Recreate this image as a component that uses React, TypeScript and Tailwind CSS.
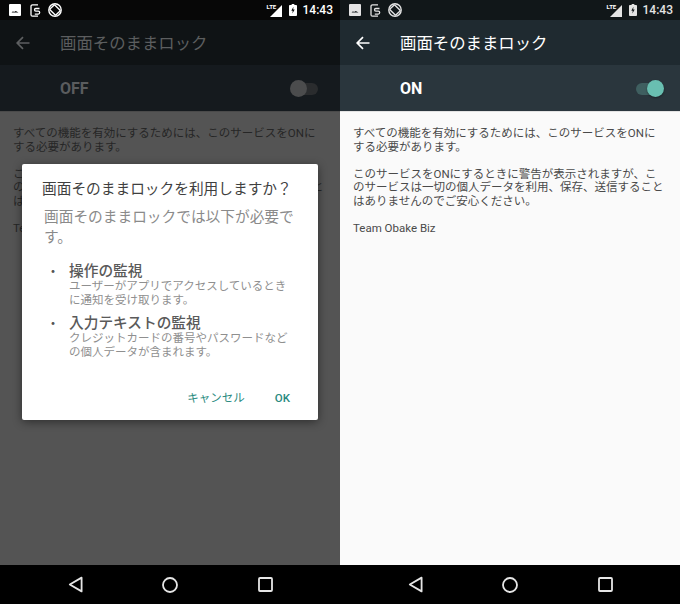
const font = "font-['Roboto','Noto_Sans_CJK_JP',sans-serif]";

function StatusIcons({ dim }: { dim?: boolean }) {
  const c = dim ? "#e4e4e4" : "#ffffff";
  const bg = dim ? "#111719" : "#070707";
  return (
    <div className="flex h-5 items-center pl-[9px] pr-[7px]">
      <svg width="12" height="12" viewBox="0 0 12 12">
        <rect x="0" y="0" width="12" height="12" rx="1" fill={c} />
        <path d="M2.5 8.6 4 7.2 5 8 6.8 7 9.5 8.6Z" fill={bg} />
      </svg>
      <svg className="ml-[9px]" width="11" height="13" viewBox="0 0 11 13" fill="none" stroke={c} strokeWidth="1.3">
        <path d="M8 .8H2.5A1.5 1.5 0 0 0 1 2.3v8.4a1.5 1.5 0 0 0 1.5 1.5H8" />
        <path d="M9.5 4.5H5.8a1.2 1.2 0 0 0 0 2.6h2.4a1.5 1.5 0 0 1 0 3H4.8" />
      </svg>
      <svg className="ml-[7px]" width="14" height="14" viewBox="0 0 14 14" fill="none" stroke={c} strokeWidth="1.4">
        <circle cx="7" cy="7" r="6.2" />
        <rect x="3.6" y="2.8" width="6.8" height="8.4" rx=".8" transform="rotate(-45 7 7)" fill={bg} />
      </svg>
      <div className="flex-1" />
      <div className="relative h-[13px] w-[15px]">
        <svg className="absolute left-0 top-[1px]" width="15" height="12" viewBox="0 0 15 12">
          <path d="M15 0v12H3Z" fill={c} />
        </svg>
        <span className={`absolute left-0 top-0 text-[6px] font-bold leading-[6px] text-white ${font}`}>LTE</span>
      </div>
      <svg className="ml-[7px]" width="8" height="12" viewBox="0 0 9 13" preserveAspectRatio="none">
        <path d="M3 0h3v1h2a1 1 0 0 1 1 1v10a1 1 0 0 1-1 1H1a1 1 0 0 1-1-1V2a1 1 0 0 1 1-1h2Z" fill={c} />
        <path d="M5 3 2.6 7.2H4.2L3.8 10.4 6.4 6H4.7Z" fill={bg} />
      </svg>
      <span className={`ml-[6px] text-[12px] font-medium leading-5 ${font}`} style={{ color: c }}>14:43</span>
    </div>
  );
}

function NavBar() {
  return (
    <div className="flex h-[39px] shrink-0 items-center bg-black pl-[68px]">
      <svg width="15" height="17" viewBox="0 0 15 17" fill="none" stroke="#e6e6e6" strokeWidth="1.8" strokeLinejoin="round">
        <path d="M13.6 1.6v13.8L1.8 8.5Z" />
      </svg>
      <svg className="ml-[79px]" width="16" height="16" viewBox="0 0 16 16" fill="none" stroke="#e6e6e6" strokeWidth="1.8">
        <circle cx="8" cy="8" r="7" />
      </svg>
      <svg className="ml-[80px]" width="15" height="15" viewBox="0 0 15 15" fill="none" stroke="#e6e6e6" strokeWidth="1.8">
        <rect x="1" y="1" width="13" height="13" rx="1" />
      </svg>
    </div>
  );
}

function BackArrow({ color }: { color: string }) {
  return (
    <svg width="14" height="14" viewBox="0 0 14 14" fill="none" stroke={color} strokeWidth="1.7">
      <path d="M13.5 7H1.6M7 1.2 1.2 7 7 12.8" />
    </svg>
  );
}

function Body({ tone }: { tone: string }) {
  return (
    <div className={`flex-1 pl-[13px] pr-[14px] pt-[15px] text-[11.5px] leading-[13.5px] ${tone}`}>
      <p>すべての機能を有効にするためには、このサービスをONにする必要があります。</p>
      <p className="mt-[13.5px]">このサービスをONにするときに警告が表示されますが、このサービスは一切の個人データを利用、保存、送信することはありませんのでご安心ください。</p>
      <p className="mt-[14px]">Team Obake Biz</p>
    </div>
  );
}

function LeftPanel() {
  return (
    <div className={`relative flex w-[340px] flex-col bg-[#545454] ${font}`}>
      <div className="h-5 shrink-0 bg-[#070707]">
        <StatusIcons />
      </div>
      <div className="flex h-[45px] shrink-0 items-center bg-[#0f1315] pl-4 pt-[1px]">
        <BackArrow color="#5d5f61" />
        <span className="ml-[30px] mt-[2px] text-[16.4px] leading-none text-[#5c5e5f]">画面そのままロック</span>
      </div>
      <div className="flex h-[47px] shrink-0 items-center justify-between border-b border-[#4a4a4a] bg-[#151a1e] pl-[60px] pr-[22px] pt-[1px]">
        <span className="mt-[1px] text-[16px] font-bold text-[#5a5c5e]">OFF</span>
        <div className="relative flex h-[17px] w-[28px] items-center justify-end">
          <div className="h-[12px] w-[24px] rounded-full bg-[#2a2c2e]" />
          <div className="absolute left-0 top-0 h-[17px] w-[17px] rounded-full bg-[#4b4c4d]" />
        </div>
      </div>
      <Body tone="text-[#262626]" />
      <NavBar />

      {/* Dialog */}
      <div className="absolute left-[22px] top-[164px] h-[256px] w-[296px] rounded-[2px] bg-white shadow-[0_2px_10px_rgba(0,0,0,0.45)]">
        <p className="ml-[20px] mt-[14px] text-[14.7px] leading-[22px] text-[#3f3f3f]">画面そのままロックを利用しますか？</p>
        <p className="ml-[22px] mr-[20px] mt-[7px] text-[14.7px] leading-[20px] text-[#8a8a8a]">画面そのままロックでは以下が必要です。</p>
        <div className="relative ml-[47px] mr-[28px] mt-[16px]">
          <span className="absolute left-[-23px] top-0 text-[14px] leading-[17px] text-[#555555]">・</span>
          <p className="text-[14.7px] font-medium leading-[17px] text-[#5a5a5a]">操作の監視</p>
          <p className="text-[11.5px] leading-[13.5px] text-[#8f8f8f]">ユーザーがアプリでアクセスしているときに通知を受け取ります。</p>
          <span className="absolute left-[-23px] top-[52px] text-[14px] leading-[17px] text-[#555555]">・</span>
          <p className="mt-[8px] text-[14.7px] font-medium leading-[17px] text-[#5a5a5a]">入力テキストの監視</p>
          <p className="text-[11.5px] leading-[13.5px] text-[#8f8f8f]">クレジットカードの番号やパスワードなどの個人データが含まれます。</p>
        </div>
        <div className="absolute bottom-[15px] right-[28px] flex items-center gap-[30px] text-[11.5px] leading-[14px] text-[#2a8b7f]">
          <span>キャンセル</span>
          <span className="font-medium">OK</span>
        </div>
      </div>
    </div>
  );
}

function RightPanel() {
  return (
    <div className={`flex w-[340px] flex-col bg-[#fafafa] ${font}`}>
      <div className="h-5 shrink-0 bg-[#111719]">
        <StatusIcons dim />
      </div>
      <div className="flex h-[45px] shrink-0 items-center bg-[#1f2a30] pl-4 pt-[1px]">
        <BackArrow color="#ffffff" />
        <span className="ml-[30px] mt-[2px] text-[16.4px] leading-none text-white">画面そのままロック</span>
      </div>
      <div className="flex h-[47px] shrink-0 items-center justify-between border-b border-[#e3e3e3] bg-[#2a363d] pl-[60px] pr-[16px] pt-[1px]">
        <span className="mt-[1px] text-[16px] font-bold text-white">ON</span>
        <div className="relative flex h-[17px] w-[28px] items-center">
          <div className="h-[12px] w-[24px] rounded-full bg-[#3f5f60]" />
          <div className="absolute right-0 top-0 h-[17px] w-[17px] rounded-full bg-[#69bfb1] shadow-[0_1px_2px_rgba(0,0,0,0.4)]" />
        </div>
      </div>
      <Body tone="text-[#4a4a4a]" />
      <NavBar />
    </div>
  );
}

export default function App() {
  return (
    <div className="flex h-[604px] w-[680px] overflow-hidden bg-black">
      <LeftPanel />
      <RightPanel />
    </div>
  );
}
